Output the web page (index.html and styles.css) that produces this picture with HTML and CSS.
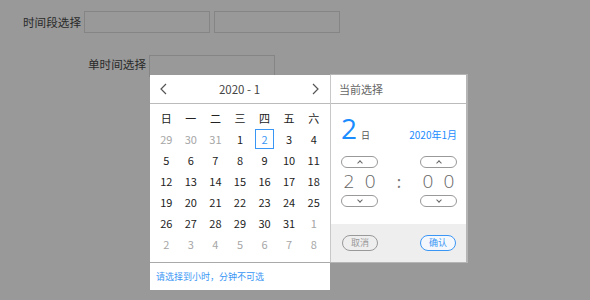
FILE: index.html
```html
<!DOCTYPE html>
<html lang="zh-CN">
<head>
	<meta charset="UTF-8" />
	<meta name="viewport" content="width=device-width, initial-scale=1.0" />
	<title>时间选择</title>
	<link rel="stylesheet" href="styles.css">
</head>
<body>
	<div class="row range">
		<label>时间段选择</label>
		<input type="text" class="ipt" />
		<input type="text" class="ipt" />
	</div>
	<div class="row single">
		<label>单时间选择</label>
		<div class="picker">
			<input type="text" class="ipt" />
			<!-- 下拉日历 start -->
			<div class="popup">
				<div class="cal">
					<div class="cal-main">
						<div class="cal-head">
							<svg class="arrow" width="7" height="12" viewBox="0 0 7 12"><path d="M6 1 L1 6 L6 11" /></svg>
							<span>2020 - 1</span>
							<svg class="arrow" width="7" height="12" viewBox="0 0 7 12"><path d="M1 1 L6 6 L1 11" /></svg>
						</div>
						<div class="grid">
							<span>日</span><span>一</span><span>二</span><span>三</span><span>四</span><span>五</span><span>六</span>
							<span class="other">29</span><span class="other">30</span><span class="other">31</span><span>1</span><span class="on">2</span><span>3</span><span>4</span>
							<span>5</span><span>6</span><span>7</span><span>8</span><span>9</span><span>10</span><span>11</span>
							<span>12</span><span>13</span><span>14</span><span>15</span><span>16</span><span>17</span><span>18</span>
							<span>19</span><span>20</span><span>21</span><span>22</span><span>23</span><span>24</span><span>25</span>
							<span>26</span><span>27</span><span>28</span><span>29</span><span>30</span><span>31</span><span class="other">1</span>
							<span class="other">2</span><span class="other">3</span><span class="other">4</span><span class="other">5</span><span class="other">6</span><span class="other">7</span><span class="other">8</span>
						</div>
					</div>
					<div class="cal-foot">请选择到小时，分钟不可选</div>
				</div>
				<div class="side">
					<div class="side-head">当前选择</div>
					<div class="side-body">
						<div class="day">
							<span class="big">2</span><span class="ri">日</span>
							<span class="ym">2020年1月</span>
						</div>
						<div class="time">
							<div class="col">
								<i class="btn up"></i>
								<div class="num"><span>2</span><span>0</span></div>
								<i class="btn down"></i>
							</div>
							<div class="colon">:</div>
							<div class="col">
								<i class="btn up"></i>
								<div class="num"><span>0</span><span>0</span></div>
								<i class="btn down"></i>
							</div>
						</div>
					</div>
					<div class="side-foot">
						<button class="cancel">取消</button>
						<button class="ok">确认</button>
					</div>
				</div>
			</div>
			<!-- 下拉日历 end -->
		</div>
	</div>
</body>
</html>
```
FILE: styles.css
```css
* {
	padding: 0;
	margin: 0;
	box-sizing: border-box;
}

body {
	height: 100vh;
	overflow: hidden;
	background-color: #999;
	font-family: "Noto Sans CJK SC", sans-serif;
	color: #333;
}

.row {
	display: flex;
	align-items: center;
}

.row label {
	font-size: 11.6px;
	color: #2a2a2a;
	margin-right: 3px;
}

.ipt {
	outline: 0;
	width: 126px;
	height: 22px;
	border: 1px solid #858585;
	background-color: transparent;
}

.range {
	padding: 11px 0 0 23px;
}

.range .ipt + .ipt {
	margin-left: 4px;
}

.single {
	padding: 18px 0 0 88px;
}

.picker {
	position: relative;
}

/* 下拉日历 start */
.popup {
	position: absolute;
	top: calc(100% - 2px);
	left: 1px;
	display: flex;
	align-items: flex-start;
}

.cal {
	width: 180px;
	background-color: #fff;
}

.cal-main {
	border-bottom: 1px solid #a9a9a9;
}

.cal-head {
	display: flex;
	justify-content: space-between;
	align-items: center;
	height: 29px;
	padding: 0 11px 0 10px;
	border-bottom: 1px solid #bbb;
	font-size: 11.5px;
	color: #444;
}

.cal-head .arrow path {
	fill: none;
	stroke: #555;
	stroke-width: 1.2;
}

.grid {
	display: grid;
	grid-template-columns: repeat(7, 1fr);
	grid-auto-rows: 21px;
	padding: 4px 4px 7px;
}

.grid span {
	display: flex;
	justify-content: center;
	align-items: center;
	font-size: 11px;
	color: #222;
}

.grid .other {
	color: #a6a6a6;
}

.grid .on {
	width: 19px;
	height: 20px;
	justify-self: center;
	border: 1px solid #3a96f5;
	color: #3a96f5;
}

.cal-foot {
	height: 27px;
	line-height: 27px;
	padding-left: 6px;
	font-size: 9px;
	color: #3a96f5;
}

.side {
	width: 136px;
	background-color: #fff;
	border-left: 1px solid #c8c8c8;
	box-shadow: 1px 0 0 1px #b5b5b5;
}

.side-head {
	height: 29px;
	line-height: 29px;
	padding-left: 8px;
	border-bottom: 1px solid #bbb;
	font-size: 11px;
	color: #666;
}

.side-body {
	height: 120px;
	padding: 10px 9px 0 10px;
}

.day {
	display: flex;
	align-items: baseline;
	height: 40px;
}

.day .big {
	font-family: "Open Sans", sans-serif;
	font-size: 28px;
	line-height: 28px;
	color: #1a8cff;
}

.day .ri {
	font-size: 9px;
	color: #555;
	margin-left: 4px;
}

.day .ym {
	margin-left: auto;
	font-size: 10px;
	color: #1a8cff;
}

.time {
	display: flex;
	justify-content: space-between;
	align-items: center;
	margin-top: 2px;
}

.col {
	display: flex;
	flex-direction: column;
	align-items: center;
	width: 37px;
}

.btn {
	position: relative;
	width: 37px;
	height: 12px;
	border: 1px solid #999;
	border-radius: 7px;
}

.btn::after {
	content: "";
	position: absolute;
	left: 16px;
	width: 3px;
	height: 3px;
	border-left: 1px solid #666;
	border-top: 1px solid #666;
}

.btn.up::after {
	top: 4px;
	transform: rotate(45deg);
}

.btn.down::after {
	top: 2px;
	transform: rotate(-135deg);
}

.num {
	display: flex;
	justify-content: space-between;
	width: 32px;
	height: 27px;
	line-height: 27px;
	font-family: "Open Sans", sans-serif;
	font-weight: 300;
	font-size: 19px;
	color: #666;
}

.colon {
	font-size: 16px;
	color: #777;
}

.side-foot {
	display: flex;
	justify-content: space-between;
	align-items: center;
	height: 38px;
	padding: 0 10px 0 11px;
	background-color: #eee;
}

.side-foot button {
	outline: 0;
	width: 36px;
	height: 16px;
	border-radius: 8px;
	border: 1px solid #999;
	background-color: #eee;
	font-family: "Noto Sans CJK SC", sans-serif;
	font-size: 9px;
	color: #999;
}

.side-foot .ok {
	border-color: #3a96f5;
	color: #3a96f5;
	background-color: #f4f8fc;
}
/* 下拉日历 end */
```
